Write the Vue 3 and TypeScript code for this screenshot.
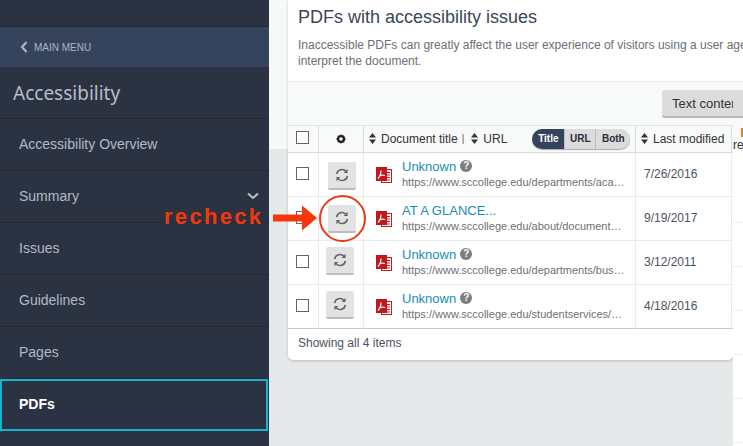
<script setup lang="ts">
interface Row {
  title: string
  url: string
  modified: string
  unknown: boolean
}

const rows: Row[] = [
  { title: 'Unknown', url: 'https://www.sccollege.edu/departments/academic/files/overview.pdf', modified: '7/26/2016', unknown: true },
  { title: 'AT A GLANCE...', url: 'https://www.sccollege.edu/about/documents/at-a-glance.pdf', modified: '9/19/2017', unknown: false },
  { title: 'Unknown', url: 'https://www.sccollege.edu/departments/business/files/guide.pdf', modified: '3/12/2011', unknown: true },
  { title: 'Unknown', url: 'https://www.sccollege.edu/studentservices/Documents/handbook.pdf', modified: '4/18/2016', unknown: true },
]

const menu = ['Accessibility Overview', 'Summary', 'Issues', 'Guidelines', 'Pages', 'PDFs']
</script>

<template>
  <div class="page">
    <aside class="sidebar">
      <div class="back">
        <svg class="back-icon" width="8" height="12" viewBox="0 0 8 12"><path d="M6.5 1 L2 6 L6.5 11" fill="none" stroke="#a9b4c6" stroke-width="2.2" /></svg>
        <span>MAIN MENU</span>
      </div>
      <div class="section-title">Accessibility</div>
      <nav>
        <a v-for="item in menu" :key="item" class="nav-item" :class="{ active: item === 'PDFs' }">
          {{ item }}
          <svg v-if="item === 'Summary'" class="chevron" width="12" height="8" viewBox="0 0 12 8"><path d="M1 1.5 L6 6 L11 1.5" fill="none" stroke="#b9c1cd" stroke-width="2" /></svg>
        </a>
      </nav>
    </aside>

    <main class="content">
      <section class="card">
        <div class="intro">
          <h2>PDFs with accessibility issues</h2>
          <p>Inaccessible PDFs can greatly affect the user experience of visitors using a user agent to<br />interpret the document.</p>
        </div>
        <div class="toolbar">
          <button class="filter-btn"><span>Text content</span></button>
        </div>
        <table>
          <colgroup>
            <col class="c-check" /><col class="c-gear" /><col class="c-title" /><col class="c-date" /><col class="c-end" />
          </colgroup>
          <thead>
            <tr>
              <th class="center"><span class="checkbox" /></th>
              <th class="center">
                <svg class="gear" width="10" height="10" viewBox="0 0 10 10"><circle cx="5" cy="5" r="2.9" fill="none" stroke="#222" stroke-width="2.3" /><path d="M5 .4V2M5 8v1.6M.4 5H2M8 5h1.6M1.8 1.8l1 1M7.2 7.2l1 1M8.2 1.8l-1 1M2.8 7.2l-1 1" stroke="#222" stroke-width="1.3" /></svg>
              </th>
              <th>
                <div class="title-head">
                  <svg class="sort" width="7" height="11" viewBox="0 0 7 11"><path d="M3.5 0 7 4.4H0ZM3.5 11 0 6.6H7Z" fill="#333" /></svg>
                  <span>Document title</span>
                  <span class="pipe">|</span>
                  <svg class="sort" width="7" height="11" viewBox="0 0 7 11"><path d="M3.5 0 7 4.4H0ZM3.5 11 0 6.6H7Z" fill="#333" /></svg>
                  <span>URL</span>
                  <div class="toggle">
                    <b class="on">Title</b><b>URL</b><b>Both</b>
                  </div>
                </div>
              </th>
              <th>
                <div class="title-head">
                  <svg class="sort" width="7" height="11" viewBox="0 0 7 11"><path d="M3.5 0 7 4.4H0ZM3.5 11 0 6.6H7Z" fill="#333" /></svg>
                  <span>Last modified</span>
                </div>
              </th>
              <th class="end" />
            </tr>
          </thead>
          <tbody>
            <tr v-for="(row, i) in rows" :key="i">
              <td class="center"><span class="checkbox" /></td>
              <td class="center">
                <button class="recheck" :class="{ 'nudged-first': i === 0, nudged: i === 1 }">
                  <svg width="14" height="14" viewBox="0 0 14 14">
                    <path d="M1.6 6A5.5 5.5 0 0 1 11 3.2M12.4 8A5.5 5.5 0 0 1 3 10.8" fill="none" stroke="#666" stroke-width="1.6" />
                    <path d="M12.6 .8V5H8.6ZM1.4 13.2V9H5.4Z" fill="#666" />
                  </svg>
                </button>
              </td>
              <td>
                <div class="doc">
                  <svg class="pdf" width="16" height="16" viewBox="0 0 16 16">
                    <rect x="5.5" y="2.500" width="10" height="13" fill="#fff" stroke="#c4161c" />
                    <path d="M11 5.500h3M11 8h3M11 10.500h3M11 13h3" stroke="#c4161c" />
                    <rect x="0" y="0" width="11" height="14" fill="#c4161c" />
                    <path d="M2 11.500c2-2 3-5 3-8M3 9c2-1 4-1.200 6-.5" fill="none" stroke="#fff" stroke-width="1.200" />
                  </svg>
                  <div class="doc-text">
                    <div class="doc-title">
                      <a>{{ row.title }}</a>
                      <span v-if="row.unknown" class="help">?</span>
                    </div>
                    <div class="doc-url">{{ row.url }}</div>
                  </div>
                </div>
              </td>
              <td class="date">{{ row.modified }}</td>
              <td class="end" />
            </tr>
          </tbody>
        </table>
        <div class="footer">Showing all 4 items</div>
      </section>
      <div class="strip">
        <div class="strip-head"><i /><span>re</span></div>
        <div v-for="n in 6" :key="n" class="strip-row" />
      </div>
    </main>

    <div class="annotation">
      <span class="note">recheck</span>
      <svg class="arrow" width="44" height="26" viewBox="0 0 44 26"><path d="M0 9.500H29V0.500L44 13 29 25.500V16.500H0Z" fill="#f4380b" /></svg>
      <span class="ring" />
    </div>
  </div>
</template>

<style>
html, body {
  margin: 0;
  overflow: hidden;
}
</style>

<style scoped>
.page {
  position: relative;
  display: flex;
  width: 743px;
  height: 446px;
  overflow: hidden;
  font-family: "Liberation Sans", Arial, sans-serif;
  color: #3d4554;
}

.sidebar {
  flex: 0 0 269px;
  box-sizing: border-box;
  padding-top: 26px;
  background: #2b3242;
}

.back {
  display: flex;
  align-items: center;
  gap: 6px;
  height: 41px;
  padding-left: 20px;
  box-sizing: border-box;
  border-top: 1px solid #232936;
  background: #36435c;
  color: #a9b4c6;
  font-size: 10px;
}

.section-title {
  display: flex;
  align-items: center;
  height: 52px;
  box-sizing: border-box;
  padding-left: 13px;
  border-bottom: 1px solid #232936;
  color: #b5bdc9;
  font-family: "Noto Sans", sans-serif;
  font-size: 19px;
}

.nav-item {
  position: relative;
  display: flex;
  align-items: center;
  justify-content: space-between;
  height: 52px;
  box-sizing: border-box;
  padding: 0 10px 2px 19px;
  border-bottom: 1px solid #232936;
  color: #b1bac8;
  font-size: 14px;
}

.nav-item.active {
  width: 268px;
  height: 52px;
  padding: 0 0 2px 17px;
  border: 2px solid #13b5d1;
  color: #fff;
  font-weight: bold;
}

.content {
  flex: 1;
  min-width: 0;
  display: flex;
  align-items: flex-start;
  padding-left: 19px;
  background: linear-gradient(#f7f8f8 0 149px, #e6e9ea 149px);
}

.card {
  flex: 0 0 445px;
  min-width: 0;
  height: 360px;
  box-sizing: border-box;
  border-radius: 0 0 5px 5px;
  background: #fff;
  box-shadow: 0 1px 3px rgba(0, 0, 0, 0.2);
}

.intro {
  height: 82px;
  margin-right: -10px;
  box-sizing: border-box;
  padding: 6px 10px 0;
  border-bottom: 1px solid #e8eaec;
  background: #fff;
  overflow: hidden;
  white-space: nowrap;
}

h2 {
  margin: 0 0 9px;
  font-size: 18px;
  font-weight: normal;
  line-height: 22px;
  color: #3b4658;
}

.intro p {
  margin: 0;
  font-size: 12px;
  line-height: 16px;
  color: #6b6f76;
}

.toolbar {
  position: relative;
  height: 43px;
  margin-right: -10px;
  box-sizing: border-box;
  padding: 8px 0 0 374px;
  background: #f8f9f9;
  overflow: hidden;
}

.filter-btn {
  display: block;
  width: 81px;
  height: 28px;
  padding: 0 0 0 10px;
  border: 0;
  border-bottom: 2px solid #b9b9b9;
  border-radius: 3px 0 0 3px;
  background: #dcdcdc;
  color: #333;
  font: 13px "Liberation Sans", Arial, sans-serif;
  text-align: left;
}

.filter-btn span {
  display: block;
  width: 61px;
  overflow: hidden;
  white-space: nowrap;
}

table {
  width: 445px;
  border-collapse: separate;
  border-spacing: 0;
  table-layout: fixed;
}

.c-check { width: 31px; }
.c-gear { width: 45px; }
.c-title { width: 272px; }
.c-date { width: 96px; }
.c-end { width: 1px; }

th, td {
  padding: 0;
  border-right: 1px solid #e9ebec;
  border-bottom: 1px solid #e9ebec;
}

.end { border-right: 0; }

th {
  height: 28px;
  box-sizing: border-box;
  padding: 0 0 1px 5px;
  background: #f8f9f9;
  border-top: 1px solid #e3e6e8;
  border-right-color: #d9dde0;
  border-bottom-color: #d6dade;
  color: #333;
  font-size: 12px;
  font-weight: normal;
  text-align: left;
  white-space: nowrap;
}

th.end { padding: 0; }

th.center, td.center {
  padding-left: 0;
  text-align: center;
}

td {
  height: 44px;
  box-sizing: border-box;
  padding-bottom: 2px;
}

tbody tr:last-child td {
  border-bottom-color: #c8cacc;
}

.checkbox {
  display: inline-block;
  width: 13px;
  height: 13px;
  margin: 0 2px 2px 0;
  box-sizing: border-box;
  border: 1px solid #666;
  background: #fff;
  vertical-align: middle;
}

.gear {
  vertical-align: middle;
}

.title-head {
  display: flex;
  align-items: center;
}

.title-head .sort {
  flex: none;
  margin-right: 5px;
}

.pipe {
  margin: 0 7px 0 4px;
  color: #555;
  font-size: 10px;
}

.toggle {
  display: flex;
  margin-left: 25px;
  height: 20px;
  border-radius: 10px;
  overflow: hidden;
  background: #dbdbdb;
  box-shadow: 0 1px 1px #aaa;
}

.toggle b {
  display: flex;
  align-items: center;
  justify-content: center;
  width: 30px;
  border-left: 1px solid #bdbdbd;
  color: #2a2f3a;
  font-size: 10px;
}

.toggle b:last-child { width: 34px; }

.toggle b.on {
  width: 32px;
  border-left: 0;
  background: #36435c;
  color: #fff;
}

.recheck {
  display: inline-flex;
  align-items: center;
  justify-content: center;
  width: 28px;
  height: 28px;
  margin: 0 2px 2px 0;
  padding: 0;
  border: 0;
  border-bottom: 2px solid #bcbcbc;
  border-radius: 2px;
  background: #e3e3e3;
  vertical-align: middle;
}

.recheck.nudged-first {
  transform: translate(2px, 3px);
}

.recheck.nudged {
  transform: translate(2px, 2px);
}

.doc {
  display: flex;
  align-items: center;
  padding-left: 12px;
}

.pdf {
  flex: none;
  margin: 3px 10px 0 0;
}

.doc-text {
  width: 224px;
}

.doc-title {
  display: flex;
  align-items: center;
  gap: 4px;
  height: 16px;
}

.doc-title a {
  color: #1a8bb5;
  font-size: 13px;
}

.help {
  width: 12px;
  height: 12px;
  border-radius: 50%;
  background: #7d7d7d;
  color: #fff;
  font-size: 10px;
  font-weight: bold;
  line-height: 12px;
  text-align: center;
}

.doc-url {
  margin-top: 1px;
  color: #6d7077;
  font-size: 11px;
  line-height: 14px;
  white-space: nowrap;
  overflow: hidden;
  text-overflow: ellipsis;
}

.date {
  padding-left: 8px;
  color: #4a5261;
  font-size: 12px;
}

.footer {
  padding: 7px 10px;
  color: #4a5261;
  font-size: 12px;
  line-height: 14px;
}

.strip {
  flex: 0 0 10px;
  margin-top: 125px;
  align-self: stretch;
  background: #fff;
}

.strip-head {
  position: relative;
  height: 27px;
  margin-bottom: 27px;
  overflow: hidden;
  background: #f8f9f9;
  color: #333;
  font-size: 12px;
}

.strip-head span {
  position: absolute;
  left: 0;
  top: 13px;
  line-height: 14px;
}

.strip-head i {
  position: absolute;
  left: 8px;
  top: 3px;
  width: 2px;
  height: 9px;
  background: #c98a2b;
}

.strip-row {
  height: 44px;
  box-sizing: border-box;
  border-bottom: 1px solid #eceeef;
}

.annotation {
  position: absolute;
  inset: 0;
  pointer-events: none;
}

.note {
  position: absolute;
  left: 164px;
  top: 205px;
  color: #f4380b;
  font-size: 22px;
  font-weight: bold;
  letter-spacing: 2.300px;
  line-height: 24px;
}

.arrow {
  position: absolute;
  left: 273px;
  top: 205px;
}

.ring {
  position: absolute;
  left: 319px;
  top: 195px;
  width: 47px;
  height: 47px;
  box-sizing: border-box;
  border: 2px solid #ec3a15;
  border-radius: 50%;
}
</style>
